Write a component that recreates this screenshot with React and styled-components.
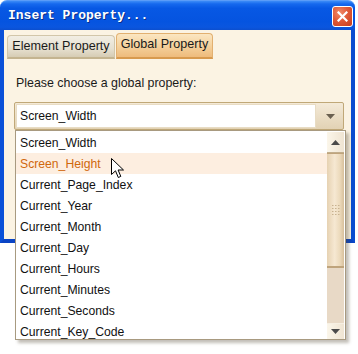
import React from 'react';
import styled, { createGlobalStyle } from 'styled-components';

const GlobalStyle = createGlobalStyle`
  html, body {
    margin: 0;
    padding: 0;
    background: #fff;
  }
  body {
    font-family: 'Liberation Sans', Arial, sans-serif;
  }
`;

const Page = styled.div`
  position: relative;
  width: 358px;
  height: 354px;
  background: #fff;
  overflow: hidden;
`;

const Window = styled.div`
  width: 355px;
  display: flex;
  flex-direction: column;
`;

const TitleBar = styled.div`
  height: 30px;
  box-sizing: border-box;
  border-radius: 7px 7px 0 0;
  background: linear-gradient(
    to bottom,
    #3c8cf7 0%,
    #1669ee 10%,
    #0758e4 25%,
    #0554e0 70%,
    #0a56df 90%,
    #0b4fcf 100%
  );
  border-top: 1px solid #5a9cf8;
  display: flex;
  align-items: center;
  justify-content: space-between;
  padding: 0 2px 0 8px;
`;

const Title = styled.span`
  font-family: 'Liberation Mono', 'Courier New', monospace;
  font-weight: bold;
  font-size: 13px;
  color: #fff;
  text-shadow: 1px 1px 0 #0a2f8a;
`;

const CloseButton = styled.div`
  width: 21px;
  height: 21px;
  box-sizing: border-box;
  border: 1px solid #fff;
  border-radius: 3px;
  background: radial-gradient(circle at 35% 30%, #f08a6a 0%, #e05a38 45%, #c63c1c 100%);
  display: flex;
  align-items: center;
  justify-content: center;
  margin-top: 1px;
`;

const Body = styled.div`
  height: 213px;
  box-sizing: border-box;
  background: #fbf3e3;
  border-left: 4px solid #0a50d8;
  border-right: 4px solid #0a4cd0;
  border-bottom: 4px solid #0a44c4;
  padding: 3px 10px 0 3px;
  display: flex;
  flex-direction: column;
`;

const TabStrip = styled.div`
  display: flex;
  align-items: flex-end;
  height: 26px;
`;

const Tab = styled.div`
  box-sizing: border-box;
  height: ${p => (p.active ? '26px' : '24px')};
  width: ${p => p.width}px;
  border-radius: 4px 4px 0 0;
  font-size: 12.6px;
  color: #1a1a1a;
  display: flex;
  align-items: center;
  justify-content: center;
  padding-bottom: ${p => (p.active ? '4px' : '1px')};
  background: ${p =>
    p.active
      ? 'linear-gradient(to bottom, #fbe6c2 0%, #f5d29e 50%, #eebb7c 100%)'
      : 'linear-gradient(to bottom, #f2eee4 0%, #e6e0d0 60%, #d6ccb4 100%)'};
  border: 1px solid ${p => (p.active ? '#e2b070' : '#d2c6aa')};
  border-bottom: 2px solid ${p => (p.active ? '#d89a4e' : '#c4b490')};
  margin-right: 1px;
`;

const Label = styled.div`
  font-size: 12.4px;
  color: #1a1a1a;
  margin: 17px 0 0 9px;
`;

const Combo = styled.div`
  margin: 12px 0 0 7px;
  width: 330px;
  height: 28px;
  box-sizing: border-box;
  border: 1px solid #c0a878;
  border-radius: 2px;
  background: linear-gradient(to bottom, #f4ead8, #e2d2b4);
  display: flex;
  padding: 1px;
  gap: 2px;
`;

const ComboField = styled.div`
  flex: 1;
  background: #fff;
  border: 1px solid #e8dcc4;
  font-size: 12.2px;
  color: #111;
  display: flex;
  align-items: center;
  padding-left: 3px;
`;

const ComboArrow = styled.div`
  width: 24px;
  display: flex;
  align-items: center;
  justify-content: center;
`;

const List = styled.div`
  position: absolute;
  left: 15px;
  top: 130px;
  width: 331px;
  height: 210px;
  box-sizing: border-box;
  border: 1px solid #a89a80;
  background: #fff;
  box-shadow: 3px 3px 3px rgba(80, 70, 50, 0.35);
  display: flex;
  padding: 1px 1px 0 0;
  overflow: hidden;
`;

const Items = styled.div`
  flex: 1;
  display: flex;
  flex-direction: column;
`;

const Item = styled.div`
  height: 21px;
  flex-shrink: 0;
  display: flex;
  align-items: center;
  padding-left: 4px;
  font-size: 12.2px;
  color: ${p => (p.hover ? '#d0680c' : '#111')};
  background: ${p => (p.hover ? '#fdeee0' : 'transparent')};
`;

const Scrollbar = styled.div`
  width: 17px;
  display: flex;
  flex-direction: column;
  background: #e8dac8;
`;

const ScrollButton = styled.div`
  height: ${p => p.h}px;
  background: linear-gradient(to right, #fbf6ea, #efe4d2);
  border-bottom: ${p => (p.up ? '1px solid #c2ae8c' : 'none')};
  border-top: ${p => (p.up ? 'none' : '1px solid #f6efe2')};
  display: flex;
  align-items: center;
  justify-content: center;
`;

const Thumb = styled.div`
  height: 115px;
  box-sizing: border-box;
  background: linear-gradient(to right, #e6d2b2 0%, #f6e8d2 45%, #ecdabc 75%, #d8c09c 100%);
  border-top: 1px solid #bfa47c;
  border-bottom: 2px solid #bfa47c;
  display: flex;
  align-items: center;
  justify-content: center;
`;

const Track = styled.div`
  flex: 1;
  background: #e8d9c6;
`;

const Cursor = styled.svg`
  position: absolute;
  left: 111px;
  top: 158px;
`;

const items = [
  'Screen_Width',
  'Screen_Height',
  'Current_Page_Index',
  'Current_Year',
  'Current_Month',
  'Current_Day',
  'Current_Hours',
  'Current_Minutes',
  'Current_Seconds',
  'Current_Key_Code',
];

const Arrow = ({ up, color = '#555' }) => (
  <svg width="9" height="5" viewBox="0 0 9 5">
    <path d={up ? 'M0 5 L4.5 0 L9 5 Z' : 'M0 0 L9 0 L4.5 5 Z'} fill={color} />
  </svg>
);

const Grip = () => (
  <svg width="9" height="10" viewBox="0 0 9 10">
    {[0, 3, 6, 9].map(y =>
      [1, 4, 7].map(x => <rect key={`${x}-${y}`} x={x} y={y} width="1.5" height="1" fill="#c8b290" />)
    )}
  </svg>
);

const App = () => (
  <Page>
    <GlobalStyle />
    <Window>
      <TitleBar>
        <Title>Insert Property...</Title>
        <CloseButton>
          <svg width="11" height="11" viewBox="0 0 11 11">
            <path d="M1.5 1.5 L9.5 9.5 M9.5 1.5 L1.5 9.5" stroke="#fff" strokeWidth="2.2" strokeLinecap="square" />
          </svg>
        </CloseButton>
      </TitleBar>
      <Body>
        <TabStrip>
          <Tab width={108}>Element Property</Tab>
          <Tab width={97} active>
            Global Property
          </Tab>
        </TabStrip>
        <Label>Please choose a global property:</Label>
        <Combo>
          <ComboField>Screen_Width</ComboField>
          <ComboArrow>
            <Arrow color="#6a6050" />
          </ComboArrow>
        </Combo>
      </Body>
    </Window>
    <List>
      <Items>
        {items.map((name, i) => (
          <Item key={name} hover={i === 1}>
            {name}
          </Item>
        ))}
      </Items>
      <Scrollbar>
        <ScrollButton h={20} up>
          <Arrow up color="#4a4a4a" />
        </ScrollButton>
        <Thumb>
          <Grip />
        </Thumb>
        <Track />
        <ScrollButton h={15}>
          <Arrow color="#4a4a4a" />
        </ScrollButton>
      </Scrollbar>
    </List>
    <Cursor width="14" height="22" viewBox="0 0 14 22">
      <path
        d="M0.5 0.5 L0.5 16.5 L4.5 12.8 L7.3 19.5 L9.8 18.4 L7.1 12 L12.5 12 Z"
        fill="#fff"
        stroke="#000"
        strokeWidth="1"
        strokeLinejoin="miter"
      />
    </Cursor>
  </Page>
);

export default App;
